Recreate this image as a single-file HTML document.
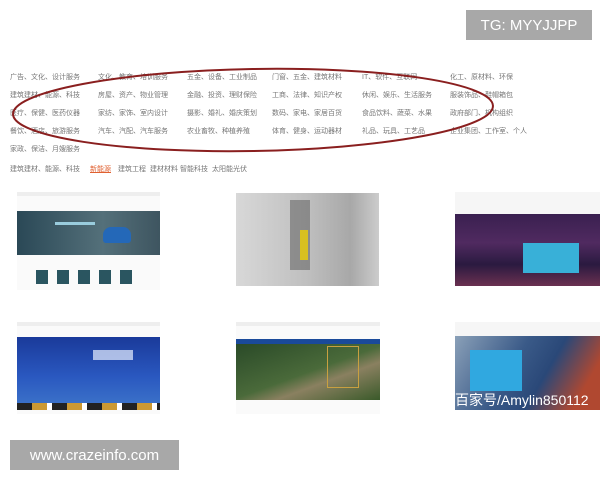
<!DOCTYPE html>
<html><head><meta charset="utf-8"><style>
body{margin:0;width:600px;height:480px;background:#fff;position:relative;overflow:hidden;font-family:"Liberation Sans","Noto Sans CJK SC",sans-serif}
.a{position:absolute}
.t{position:absolute;font-size:7px;color:#777;white-space:nowrap}
.badge{position:absolute;background:#a8a8a8;color:#fff;font-size:16px;display:flex;align-items:center;justify-content:center}
</style></head><body>
<div class="badge" style="left:466px;top:10px;width:126px;height:30px;font-size:15px">TG: MYYJJPP</div>
<div class="badge" style="left:10px;top:440px;width:169px;height:30px;font-size:15px">www.crazeinfo.com</div>

<div class="t" style="left:10px;top:72px">广告、文化、设计服务</div>
<div class="t" style="left:98px;top:72px">文化、教育、培训服务</div>
<div class="t" style="left:187px;top:72px">五金、设备、工业制品</div>
<div class="t" style="left:272px;top:72px">门窗、五金、建筑材料</div>
<div class="t" style="left:362px;top:72px">IT、软件、互联网</div>
<div class="t" style="left:450px;top:72px">化工、原材料、环保</div>
<div class="t" style="left:10px;top:90px">建筑建材、能源、科技</div>
<div class="t" style="left:98px;top:90px">房屋、资产、物业管理</div>
<div class="t" style="left:187px;top:90px">金融、投资、理财保险</div>
<div class="t" style="left:272px;top:90px">工商、法律、知识产权</div>
<div class="t" style="left:362px;top:90px">休闲、娱乐、生活服务</div>
<div class="t" style="left:450px;top:90px">服装饰品、鞋帽箱包</div>
<div class="t" style="left:10px;top:108px">医疗、保健、医药仪器</div>
<div class="t" style="left:98px;top:108px">家纺、家饰、室内设计</div>
<div class="t" style="left:187px;top:108px">摄影、婚礼、婚庆策划</div>
<div class="t" style="left:272px;top:108px">数码、家电、家居百货</div>
<div class="t" style="left:362px;top:108px">食品饮料、蔬菜、水果</div>
<div class="t" style="left:450px;top:108px">政府部门、机构组织</div>
<div class="t" style="left:10px;top:126px">餐饮、酒店、旅游服务</div>
<div class="t" style="left:98px;top:126px">汽车、汽配、汽车服务</div>
<div class="t" style="left:187px;top:126px">农业畜牧、种植养殖</div>
<div class="t" style="left:272px;top:126px">体育、健身、运动器材</div>
<div class="t" style="left:362px;top:126px">礼品、玩具、工艺品</div>
<div class="t" style="left:450px;top:126px">企业集团、工作室、个人</div>
<div class="t" style="left:10px;top:144px">家政、保洁、月嫂服务</div>
<div class="t" style="left:10px;top:164px">建筑建材、能源、科技</div>
<div class="t" style="left:90px;top:164px;color:#e06030;text-decoration:underline">新能源</div>
<div class="t" style="left:118px;top:164px">建筑工程</div>
<div class="t" style="left:150px;top:164px">建材材料</div>
<div class="t" style="left:180px;top:164px">智能科技</div>
<div class="t" style="left:212px;top:164px">太阳能光伏</div>

<svg class="a" style="left:0;top:0" width="600" height="200"><ellipse cx="253" cy="110" rx="240" ry="41" fill="none" stroke="#8a1f1f" stroke-width="2" transform="rotate(-1 253 110)"/></svg>

<!-- card1 -->
<div class="a" style="left:17px;top:192px;width:143px;height:94px;background:#fafafa;border-top:4px solid #eee"></div>
<div class="a" style="left:17px;top:211px;width:143px;height:44px;background:linear-gradient(90deg,#2a4856,#54707a 60%,#3e5560)"></div>
<div class="a" style="left:103px;top:227px;width:28px;height:16px;background:#2468b8;border-radius:8px 8px 3px 3px"></div>
<div class="a" style="left:55px;top:222px;width:40px;height:3px;background:#9cd"></div>
<div class="a" style="left:36px;top:270px;width:100px;height:14px;background:repeating-linear-gradient(90deg,#2a5560 0 12px,transparent 12px 21px)"></div>
<!-- card2 -->
<div class="a" style="left:236px;top:193px;width:143px;height:93px;background:linear-gradient(90deg,#d8d8d8,#bfbfbf 50%,#a8a8a8 80%,#ccc)"></div>
<div class="a" style="left:290px;top:200px;width:20px;height:70px;background:#555;opacity:.5"></div>
<div class="a" style="left:300px;top:230px;width:8px;height:30px;background:#d8c020"></div>
<!-- card3 -->
<div class="a" style="left:455px;top:192px;width:145px;height:22px;background:#f6f6f6"></div>
<div class="a" style="left:455px;top:214px;width:145px;height:72px;background:linear-gradient(180deg,#3a2050,#502a60 40%,#2a1a40 70%,#6a3050)"></div>
<div class="a" style="left:523px;top:243px;width:56px;height:30px;background:#38b0d8"></div>
<!-- card4 -->
<div class="a" style="left:17px;top:322px;width:143px;height:88px;background:#fafafa;border-top:4px solid #eee"></div>
<div class="a" style="left:17px;top:337px;width:143px;height:66px;background:linear-gradient(180deg,#1a3a9a,#2a58c0 60%,#3a70c8)"></div>
<div class="a" style="left:93px;top:350px;width:40px;height:10px;background:#e8f0ff;opacity:.7"></div>
<div class="a" style="left:17px;top:403px;width:143px;height:7px;background:repeating-linear-gradient(90deg,#222 0 15px,#c93 15px 30px,#fff 30px 35px)"></div>
<!-- card5 -->
<div class="a" style="left:236px;top:322px;width:144px;height:88px;background:#fafafa;border-top:4px solid #eee"></div>
<div class="a" style="left:236px;top:339px;width:144px;height:5px;background:#1a4a9a"></div>
<div class="a" style="left:236px;top:344px;width:144px;height:56px;background:linear-gradient(160deg,#2a4a28,#4a6a3a 50%,#8a8060 65%,#3a5a2a)"></div>
<div class="a" style="left:327px;top:346px;width:30px;height:40px;border:1px solid #c9a040"></div>
<!-- card6 -->
<div class="a" style="left:455px;top:322px;width:145px;height:14px;background:#f6f6f6"></div>
<div class="a" style="left:455px;top:336px;width:145px;height:74px;background:linear-gradient(120deg,#8aa0b8,#3a5a88 40%,#2a4878 60%,#b04830 85%)"></div>
<div class="a" style="left:470px;top:350px;width:52px;height:41px;background:#30a8e0"></div>
<div class="a" style="left:455px;top:390px;width:145px;overflow:hidden;color:#fff;font-size:14px;font-family:'Liberation Sans','Noto Sans CJK SC',sans-serif;white-space:nowrap">百家号/Amylin850112</div>
</body></html>
